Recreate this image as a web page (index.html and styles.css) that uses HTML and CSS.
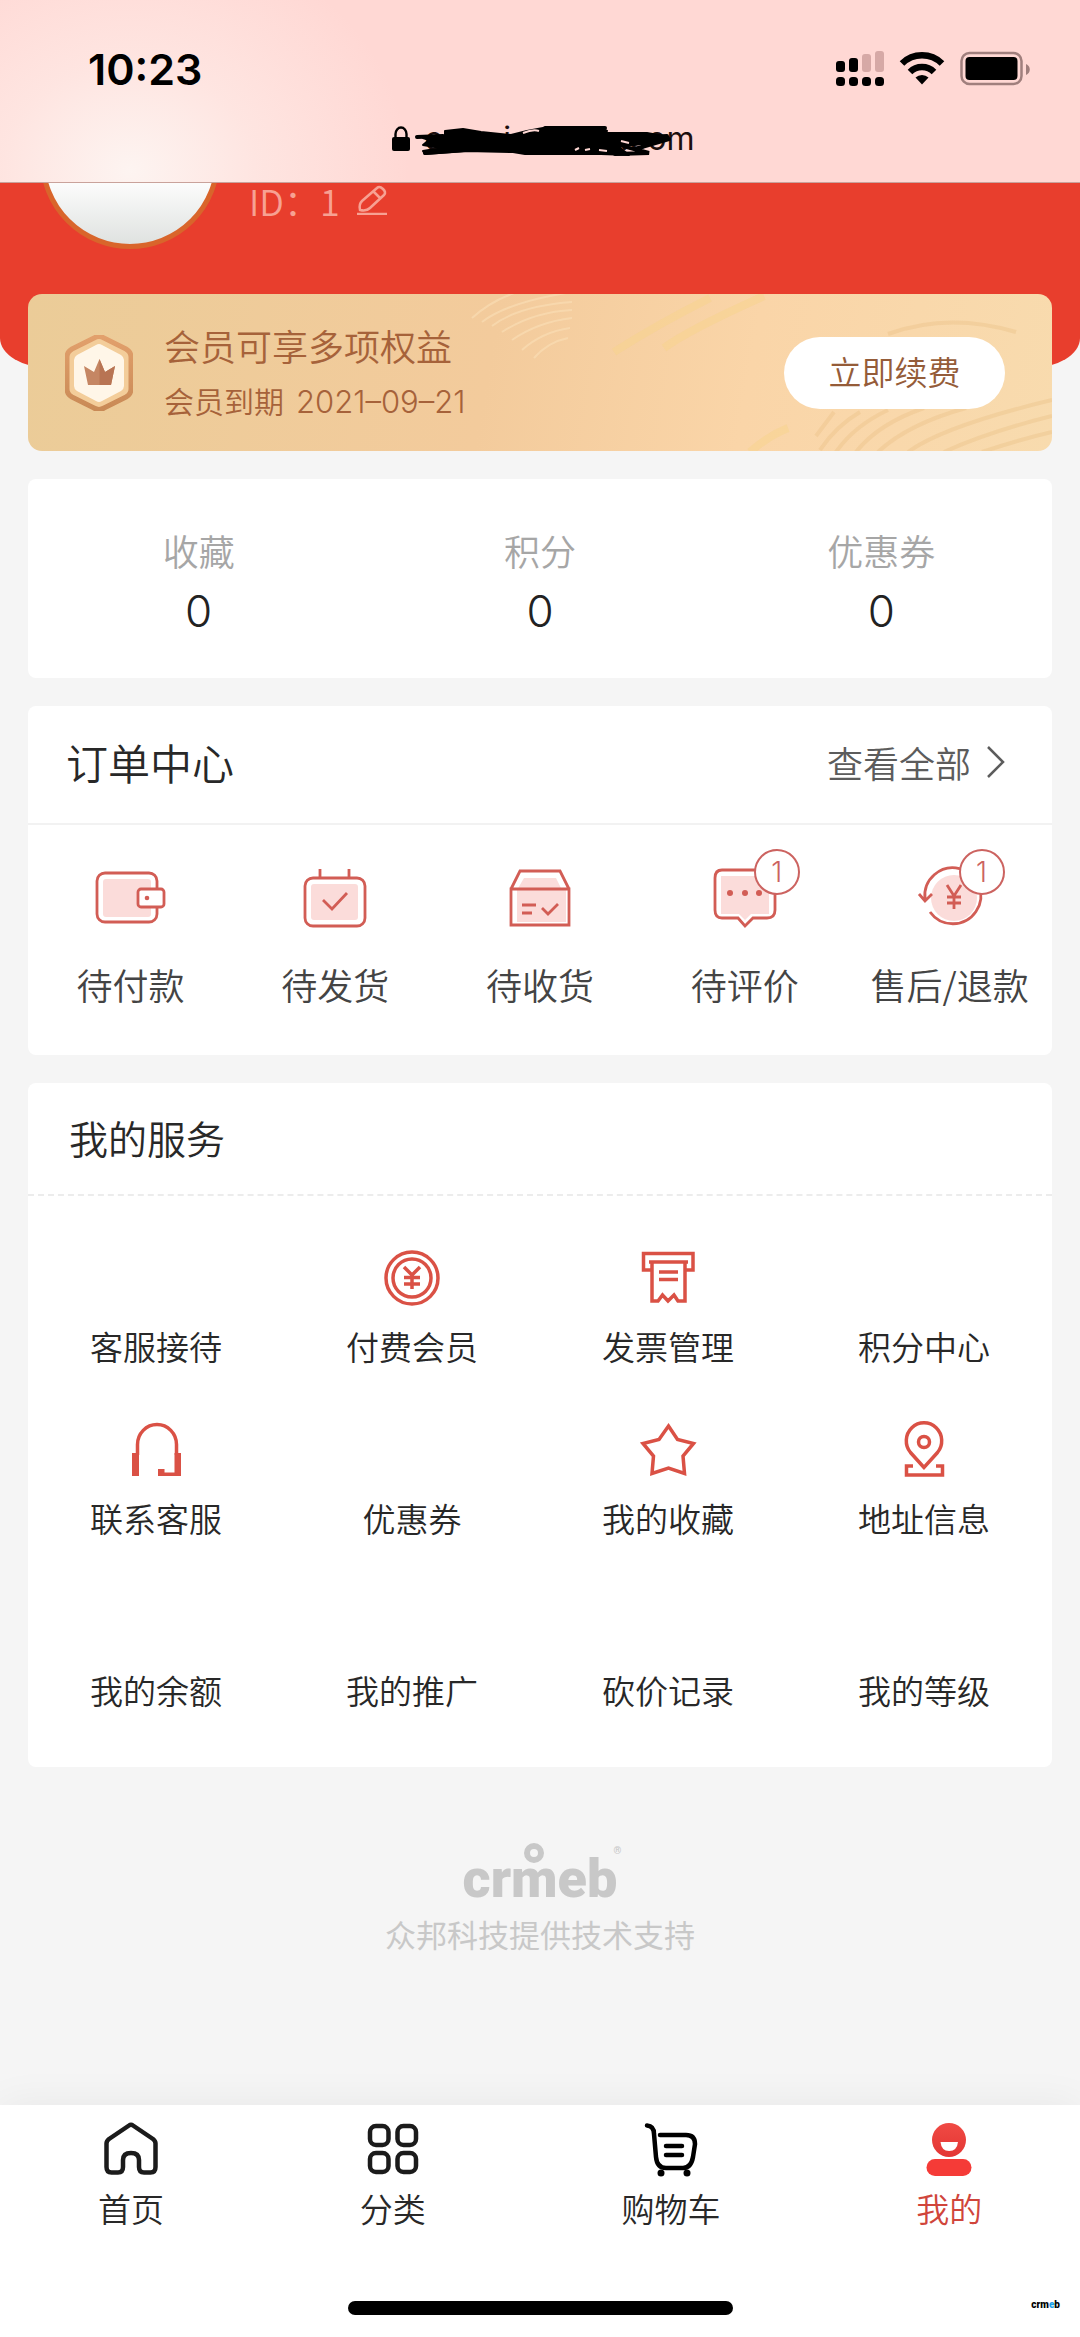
FILE: index.html
```html
<!DOCTYPE html>
<html lang="zh-CN">
<head>
<meta charset="utf-8">
<meta name="viewport" content="width=device-width, initial-scale=1">
<title>我的</title>
<link rel="stylesheet" href="styles.css">
</head>
<body>
<header class="browser">
  <div class="status">
    <time class="clock">10:23</time>
    <div class="indicators">
      <svg width="48" height="36" viewBox="0 0 48 36" aria-hidden="true">
        <rect x="0" y="10" width="9" height="11" rx="3"/><rect x="13" y="7" width="9" height="14" rx="3"/>
        <g fill="#d6a9a6"><rect x="26" y="3" width="9" height="18" rx="3"/><rect x="39" y="0" width="9" height="21" rx="3"/></g>
        <rect x="0" y="26" width="9" height="9" rx="3.5"/><rect x="13" y="26" width="9" height="9" rx="3.5"/><rect x="26" y="26" width="9" height="9" rx="3.5"/><rect x="39" y="26" width="9" height="9" rx="3.5"/>
      </svg>
      <svg width="46" height="36" viewBox="0 0 46 36" aria-hidden="true">
        <g fill="none" stroke="#000" stroke-width="6.5"><path d="M3 12.500A28.500 28.500 0 0 1 43 12.500"/><path d="M11 21A17 17 0 0 1 35 21"/></g>
        <path d="M16.500 26.500a9.500 9.500 0 0 1 13 0L23 33.500z"/>
      </svg>
      <svg width="70" height="36" viewBox="0 0 70 36" aria-hidden="true">
        <rect x="1.500" y="2" width="60" height="31" rx="8" fill="none" stroke="#a07f7d" stroke-width="2.500"/>
        <rect x="5.500" y="6" width="52" height="23" rx="4"/>
        <path d="M66 13c5 2 5 9 0 11z" fill="#a07f7d"/>
      </svg>
    </div>
  </div>
  <div class="address">
    <svg width="18" height="26" viewBox="0 0 18 26" aria-hidden="true"><rect y="11" width="18" height="14" rx="2"/><path d="M3.500 12V8a5.500 6.500 0 0 1 11 0v4" fill="none" stroke="#000" stroke-width="2.400"/></svg>
    <div class="domain">
      <span>e</span><span class="domain-mid">i</span><span class="domain-end">.com</span>
      <svg class="scribble" viewBox="0 0 258 34" aria-hidden="true">
        <path d="M8 15L30 13L30 8L48 6L66 9L96 12L112 8L128 5L186 5L192 8L184 13L204 11L240 15L228 20L204 24L214 32L186 31L110 31L98 29L52 28L10 31L8 28L26 25L8 22L14 17z" stroke="#000" stroke-width="2" stroke-linejoin="round"/>
        <path d="M2 14L28 13M10 30L50 27M130 5L190 5M184 11L232 11L254 15L208 23L234 30L200 31M212 15L252 13M220 26L254 16" fill="none" stroke="#000" stroke-width="4" stroke-linecap="round"/>
        <path d="M108 10q10-4 16-2M160 27l4-2M170 27l5-1M184 27l8 1M206 18l8 2" fill="none" stroke="#ffd8d4" stroke-width="2"/>
      </svg>
    </div>
  </div>
</header>

<section class="hero">
  <div class="avatar-clip"><div class="avatar"></div></div>
  <div class="user-id">
    <span>ID&#xFF1A;1</span>
    <button class="edit" aria-label="编辑资料">
      <svg width="30" height="32" viewBox="0 0 30 32" fill="none" stroke="currentColor" stroke-width="2.500"><path d="M3 27c-1-4 0-7 2-9L20 5c2-2 4-1 6 1s3 4 1 6L13 25c-3 3-6 3-10 2zM16 8l7 7"/><path d="M0 31h30"/></svg>
    </button>
  </div>
</section>

<main class="page">
  <section class="vip">
    <svg class="vip-art" viewBox="0 0 1024 157" preserveAspectRatio="none" fill="none" aria-hidden="true">
      <g stroke="#fae0b8" stroke-opacity=".6" stroke-width="2"><path d="M444 24Q466 4 496-4M454 28Q480 8 544-2M464 32Q490 12 544 8M474 38Q505 18 544 16M484 46Q510 28 544 24M494 56Q514 38 542 34M506 64Q520 48 540 44"/></g>
      <g stroke="#f8d48c" stroke-opacity=".5" stroke-width="8"><path d="M586 58Q630 30 682 4M636 54Q660 36 736 2M722 158Q740 142 760 134"/></g>
      <g stroke="#e9bd82" stroke-opacity=".35" stroke-width="4"><path d="M788 142L806 118M792 156Q808 132 832 118M808 158Q826 132 860 116M828 158Q850 130 896 114M850 158Q880 130 938 114M880 158Q916 132 1024 106M916 158Q960 138 1024 122M954 158Q990 146 1024 138M860 40Q920 18 988 38"/></g>
    </svg>
    <svg class="vip-badge" width="68" height="76" viewBox="0 0 68 76" aria-hidden="true">
      <defs><linearGradient id="rim" x1="0" y1="0" x2="0" y2="1"><stop stop-color="#e2a06c"/><stop offset="1" stop-color="#c98a56"/></linearGradient></defs>
      <path d="M29 3q5-3 10 0L61 14q5 3 5 8V54q0 5-5 8L39 73q-5 3-10 0L7 62q-5-3-5-8V22q0-5 5-8z" fill="#f3cd9a" stroke="url(#rim)" stroke-width="5"/>
      <path d="M31 10q3-2 6 0L56 20q3 2 3 5V51q0 3-3 5L37 66q-3 2-6 0L12 56q-3-2-3-5V25q0-3 3-5z" fill="#fff6e8"/>
      <path d="M19 31l10 6 5.500-13 5.500 13 10-6-4 19H23z" fill="#c58663"/><path d="M34.500 24l5.500 13 10-6-4 19H34.500z" fill="#b87453"/>
    </svg>
    <div class="vip-text">
      <h2>会员可享多项权益</h2>
      <p>会员到期<time datetime="2021-09-21">2021–09–21</time></p>
    </div>
    <button class="renew">立即续费</button>
  </section>

  <section class="card stats">
    <a href="#favorites"><span>收藏</span><b>0</b></a>
    <a href="#points"><span>积分</span><b>0</b></a>
    <a href="#coupons"><span>优惠券</span><b>0</b></a>
  </section>

  <section class="card">
    <div class="orders-head">
      <h2>订单中心</h2>
      <a href="#orders">查看全部<svg width="20" height="34" viewBox="0 0 20 34" fill="none" stroke="currentColor" stroke-width="2.500" aria-hidden="true"><path d="M2 2L17 17L2 32"/></svg></a>
    </div>
    <nav class="orders">
      <a href="#unpaid"><span class="icon">
        <svg viewBox="0 0 72 72"><rect class="tint" x="9" y="17" width="48" height="38" rx="3"/><rect x="3" y="11" width="60" height="49" rx="8"/><rect class="paper" x="44" y="27" width="26" height="18" rx="3"/><circle class="dot" cx="53" cy="36" r="2.300"/></svg></span>待付款</a>
      <a href="#unshipped"><span class="icon">
        <svg viewBox="0 0 72 72"><rect class="tint" x="12" y="22" width="47" height="36" rx="3"/><rect x="6" y="16" width="60" height="48" rx="8"/><path d="M21 7v9M50 7v9M24 38l9 9 15-16"/></svg></span>待发货</a>
      <a href="#unreceived"><span class="icon">
        <svg viewBox="0 0 72 72"><path class="tint" d="M20 16h32l6 12h4v32H13V28z"/><path d="M7 27h58v36H7zM7 27l9-18h40l9 18M18 43h14M18 51h10M38 46l6 6 10-10"/></svg></span>待收货</a>
      <a href="#unreviewed"><span class="icon">
        <svg viewBox="0 0 72 72"><path class="tint" d="M12 14h48v38H42l-6 6-6-6H12z"/><path d="M13 8h45q8 0 8 8v32q0 8-8 8H44l-8 8-7-8H13q-7 0-7-8V16q0-8 7-8z"/><g class="dot"><circle cx="21" cy="31" r="3"/><circle cx="36" cy="31" r="3"/><circle cx="50" cy="31" r="3"/></g></svg>
        <i class="badge">1</i></span>待评价</a>
      <a href="#refunds"><span class="icon">
        <svg viewBox="0 0 72 72"><circle class="tint" cx="40" cy="36" r="23"/><path d="M16 50A28 28 0 1 0 11 37M5 32l6 7 7-7M33 23l7 11 7-11M40 34v13M33 35h14M33 41h14"/></svg>
        <i class="badge">1</i></span>售后/退款</a>
    </nav>
  </section>

  <section class="card">
    <h2 class="services-head">我的服务</h2>
    <nav class="services">
      <a href="#reception"><span class="icon"></span>客服接待</a>
      <a href="#membership"><span class="icon"><svg viewBox="0 0 60 60"><circle cx="30" cy="30" r="26"/><circle cx="30" cy="30" r="19"/><path d="M22 19l8 8 8-8M30 27v14M22 29.500h16M22 36h16"/></svg></span>付费会员</a>
      <a href="#invoices"><span class="icon"><svg viewBox="0 0 60 60"><path d="M13 22H5.500V5.500H55V22H48M11 14H50M14 14V53H20L24.500 47 30 53 36 47 40 53H47V14M21 24H40M21 31.500H40"/></svg></span>发票管理</a>
      <a href="#points"><span class="icon"></span>积分中心</a>
      <a href="#support"><span class="icon"><svg viewBox="0 0 60 60"><path d="M11.500 35V24.500a19.500 20 0 0 1 39 0V35"/><path class="solid" d="M6 33h7v23H6zM48.500 33h6.500v23H32v-7h6.500v3.500h10z"/></svg></span>联系客服</a>
      <a href="#coupons"><span class="icon"></span>优惠券</a>
      <a href="#favorites"><span class="icon"><svg viewBox="0 0 60 60"><path d="M30.500 6L39.500 19.500 55.500 23.500 45 36 46.500 53.500 30.500 48 14 53.500 15.500 36 5 23.500 21 19.500z"/></svg></span>我的收藏</a>
      <a href="#addresses"><span class="icon"><svg viewBox="0 0 60 60"><path d="M30 47.500L16.500 32.500A17.700 18 0 1 1 43.500 32.500z"/><circle cx="30" cy="22" r="5.500"/><path d="M19 46H12.500V55H48.500V46H42"/></svg></span>地址信息</a>
      <a href="#balance"><span class="icon"></span>我的余额</a>
      <a href="#promotion"><span class="icon"></span>我的推广</a>
      <a href="#bargains"><span class="icon"></span>砍价记录</a>
      <a href="#level"><span class="icon"></span>我的等级</a>
    </nav>
  </section>

  <footer class="support">
    <div class="brand">
      <span>cr<span class="brand-m">m</span>eb</span><sup>®</sup>
    </div>
    <p>众邦科技提供技术支持</p>
  </footer>
</main>

<div class="dock">
  <nav class="tabs">
    <a href="#home"><svg width="56" height="56" viewBox="0 0 56 56" fill="none" stroke="#1b1b1b" stroke-width="4.500" stroke-linejoin="round" aria-hidden="true"><path d="M26 4.500q2-1.500 4 0L50 18q2.500 2 2.500 4.500V46q0 5.500-5 5.500H41q-5 0-5-5.500V39q0-7-8-7t-8 7v7q0 5.500-5 5.500H8.500q-5 0-5-5.500V22.500Q3.500 20 6 18z"/></svg>首页</a>
    <a href="#category"><svg width="56" height="56" viewBox="0 0 56 56" fill="none" stroke="#1b1b1b" stroke-width="4.500" aria-hidden="true"><rect x="5" y="5" width="18.500" height="19" rx="6"/><rect x="32.500" y="5" width="18.500" height="19" rx="6"/><rect x="5" y="32" width="18.500" height="19" rx="6"/><rect x="32.500" y="32" width="18.500" height="19" rx="6"/></svg>分类</a>
    <a href="#cart"><svg width="56" height="56" viewBox="0 0 56 56" fill="none" stroke="#000" stroke-width="4.500" stroke-linecap="round" aria-hidden="true"><path d="M4 4.500Q11 5 11 13L13 36Q14 47 23 47H40Q48 47 50 36L52 23Q52 14 43 14H17"/><path d="M23 25H39M23 34H39"/><g fill="#000" stroke="none"><circle cx="18" cy="52" r="3.500"/><circle cx="44" cy="52" r="3.500"/></g></svg>购物车</a>
    <a href="#me" class="active" aria-current="page"><svg width="56" height="56" viewBox="0 0 56 56" aria-hidden="true"><defs><linearGradient id="me" x1="0" y1="0" x2="0" y2="1"><stop stop-color="#f04a44"/><stop offset="1" stop-color="#e33634"/></linearGradient></defs><circle cx="28" cy="19" r="17" fill="url(#me)"/><path d="M19.500 21h17.500q-1 9-8.800 9t-8.700-9z" fill="#fff"/><rect x="5.500" y="38" width="45" height="17" rx="8.500" fill="#f53b37"/></svg>我的</a>
  </nav>
  <div class="home-bar"></div>
  <div class="mark">crm<span>e</span>b</div>
</div>
</body>
</html>
```
FILE: styles.css
```css
*, *::before { box-sizing: border-box; }
body {
  margin: 0;
  min-height: 100vh;
  display: flex;
  flex-direction: column;
  background: #f5f5f5;
  color: #282828;
  font-family: "Noto Sans CJK SC", sans-serif;
  font-weight: 350;
}
h2, p { margin: 0; font-weight: inherit; }
a { color: inherit; text-decoration: none; }
button { border: 0; padding: 0; font: inherit; color: inherit; background: none; }
svg { display: block; flex: none; }

/* Browser chrome */
.browser {
  display: flex;
  flex-direction: column;
  gap: 26px;
  padding: 45px 0 23px;
  background: radial-gradient(ellipse 280px 240px at 130px 170px, #fdf4f1 0%, rgba(254, 232, 228, .8) 45%, rgba(255, 216, 212, 0) 100%), #ffd8d4;
  border-bottom: 1px solid #c9a29b;
}
.status { display: flex; justify-content: space-between; align-items: center; height: 48px; padding: 0 50px 0 88px; }
.clock { font: 600 43px/48px Inter, sans-serif; color: #000; }
.indicators { display: flex; gap: 15px; }
.address { display: flex; justify-content: center; align-items: center; gap: 15px; height: 40px; padding-left: 6px; }
.domain { position: relative; display: flex; width: 270px; font: 400 32px/40px Inter, sans-serif; color: #1c0f0e; }
.domain-mid { margin-left: 60px; }
.domain-end { margin-left: auto; }
.scribble { position: absolute; left: -10px; top: 4px; width: 258px; height: 34px; }

/* Profile */
.hero {
  display: flex;
  height: 185px;
  padding-left: 40px;
  background: #e83e2d;
  border-radius: 0 0 50px 50px / 0 0 30px 30px;
}
.avatar-clip { flex: none; height: 80px; overflow: hidden; }
.avatar {
  width: 180px;
  height: 180px;
  margin-top: -114px;
  border: 5px solid #d9652b;
  border-radius: 50%;
  background: linear-gradient(#fff 60%, #dfe2e0);
}
.user-id { display: flex; align-items: flex-start; margin-left: 29px; font-size: 36px; line-height: 34px; color: #f7a193; }
.edit { margin-left: 17px; }

.page { display: flex; flex-direction: column; gap: 28px; margin-top: -74px; padding: 0 28px; }

/* Membership banner */
.vip {
  position: relative;
  display: flex;
  align-items: center;
  gap: 31px;
  height: 157px;
  padding: 0 47px 0 37px;
  overflow: hidden;
  border-radius: 14px;
  background: linear-gradient(100deg, #ebcc98, #f3cb9c 45%, #fad5a8 70%, #f8dbae);
  color: #a6623a;
}
.vip-art { position: absolute; inset: 0; width: 100%; height: 100%; }
.vip-badge, .vip-text, .renew { position: relative; }
.vip-text { display: grid; gap: 15px; padding-bottom: 3px; }
.vip-text h2 { font-size: 36px; line-height: 44px; }
.vip-text p { font-size: 30px; line-height: 36px; }
.vip-text time { margin-left: 12px; font: 300 31px/36px Inter, sans-serif; }
.renew { width: 221px; height: 72px; margin-left: auto; padding-bottom: 4px; border-radius: 36px; background: #fff; font-size: 33px; color: #955c39; }

/* Cards */
.card { background: #fff; border-radius: 8px; }
.stats { display: grid; grid-template-columns: repeat(3, 1fr); padding: 49px 0 43px; }
.stats a { display: grid; gap: 15px; text-align: center; font-size: 36px; line-height: 44px; color: #a6a6a6; }
.stats b { font: 300 44px/48px Inter, sans-serif; color: #222; }

.orders-head { display: flex; justify-content: space-between; align-items: center; height: 119px; padding: 0 46px 6px 38px; border-bottom: 2px solid #f2f2f2; }
.orders-head h2 { font-size: 42px; }
.orders-head a { display: flex; align-items: center; gap: 15px; font-size: 36px; color: #5c5c5c; }
.orders { display: grid; grid-template-columns: repeat(5, 1fr); padding: 37px 0 51px; }
.orders a { display: flex; flex-direction: column; align-items: center; gap: 30px; font-size: 36px; line-height: 40px; color: #444; white-space: nowrap; }
.orders .icon { position: relative; width: 72px; height: 72px; }
.orders svg { fill: none; stroke: #d25d55; stroke-width: 2.8; }
.orders .tint { fill: #fbdcda; stroke: none; }
.orders .paper { fill: #fff; }
.orders .dot { fill: #d25d55; stroke: none; }
.badge {
  position: absolute;
  left: 45px;
  top: -13px;
  width: 46px;
  height: 46px;
  border: 2px solid #cc6360;
  border-radius: 50%;
  background: #fff;
  font: 300 28px/42px Inter, sans-serif;
  text-align: center;
  color: #cc6360;
}

.services-head { height: 113px; padding-left: 41px; border-bottom: 2px dashed #ececec; font-size: 39px; line-height: 108px; }
.services { display: grid; grid-template-columns: repeat(4, 1fr); row-gap: 54px; padding: 52px 0 57px; }
.services a { display: flex; flex-direction: column; align-items: center; gap: 18px; font-size: 33px; line-height: 40px; }
.services .icon { width: 60px; height: 60px; }
.services svg { fill: none; stroke: #da5145; stroke-width: 3.5; }
.services .solid { fill: #da5145; stroke: none; }

/* Brand footer */
.support { display: flex; flex-direction: column; align-items: center; padding-top: 51px; color: #c8c8c8; }
.brand { display: flex; position: relative; font: 900 54px/66px Roboto, sans-serif; }
.brand-m { position: relative; }
.brand-m::before { content: ""; position: absolute; left: 50%; top: -4px; width: 20px; height: 20px; margin-left: -10px; border: 6px solid; border-radius: 50%; }
.brand sup { position: absolute; left: 100%; bottom: 100%; margin: 0 0 -10px -4px; font-size: 10px; line-height: 10px; }
.support p { margin-top: 2px; font-size: 31px; line-height: 40px; font-weight: 400; }

/* Bottom navigation */
.dock { position: relative; display: flex; flex-direction: column; justify-content: space-between; align-items: center; height: 232px; margin-top: auto; padding: 16px 0 22px; background: #fff; box-shadow: 0 0 40px rgba(0, 0, 0, .06); }
.tabs { display: flex; justify-content: space-around; width: 100%; }
.tabs a { display: flex; flex-direction: column; align-items: center; gap: 11px; font-size: 33px; line-height: 40px; }
.tabs .active { color: #d0453b; }
.home-bar { width: 385px; height: 14px; border-radius: 7px; background: #000; }
.mark { position: absolute; right: 20px; bottom: 26px; font: 900 10px/12px Roboto, sans-serif; color: #000; }
.mark span { color: #1aa0e8; }
```
